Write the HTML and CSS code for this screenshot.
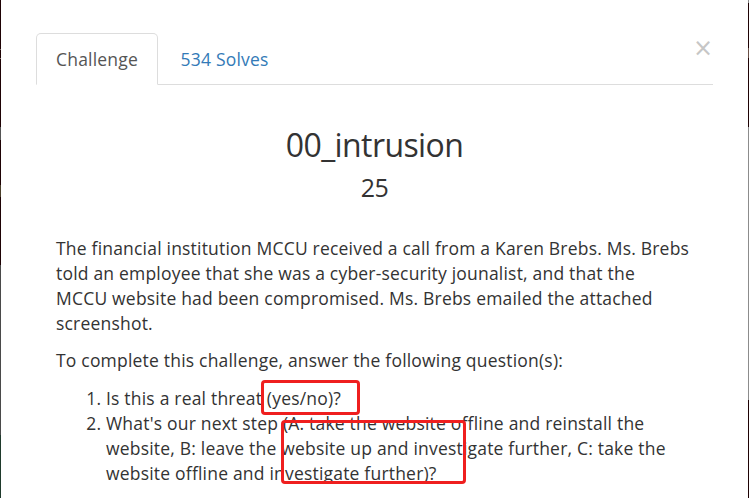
FILE: index.html
```html
<!DOCTYPE html>
<html>
<head>
<meta charset="utf-8">
<link rel="stylesheet" href="styles.css">
</head>
<body>
<div class="screen">
  <div class="edge edge-left"></div>
  <div class="main">
    <div class="modal">
      <span class="close">&times;</span>
      <ul class="tabs">
        <li class="tab active">Challenge</li>
        <li class="tab link">534 Solves</li>
      </ul>
      <div class="body">
        <h2 class="title">00_intrusion</h2>
        <h3 class="value">25</h3>
        <p class="desc">The financial institution MCCU received a call from a Karen Brebs. Ms. Brebs told an employee that she was a cyber-security jounalist, and that the MCCU&nbsp;website had been compromised. Ms. Brebs emailed the attached screenshot.</p>
        <p class="desc">To complete this challenge, answer the following question(s):</p>
        <ol class="questions">
          <li>Is this a real threat (yes/no)?</li>
          <li>What's our next step (A: take the website offline and reinstall the website, B: leave the website up and investigate further, C: take the website offline and investigate further)?</li>
        </ol>
      </div>
    </div>
    <div class="mark mark-one"></div>
    <div class="mark mark-two"></div>
  </div>
  <div class="edge edge-right"></div>
</div>
</body>
</html>
```
FILE: styles.css
```css
html, body {
  margin: 0;
  padding: 0;
  background: #ffffff;
}
.screen {
  display: flex;
  width: 749px;
  height: 498px;
  overflow: hidden;
}
.edge {
  width: 1px;
  flex: none;
}
.edge-left {
  background: linear-gradient(to bottom,
    #1e0204 0, #1e0204 49px, #7a6a66 49px, #7a6a66 50px,
    #1e0204 50px, #1e0204 58px, #8a7a76 58px, #8a7a76 59px,
    #1e0204 59px, #1e0204 127px, #555 127px, #555 140px,
    #1e0204 140px, #1e0204 185px, #4a3f2a 185px, #4a3f2a 197px,
    #1e0204 197px, #1e0204 265px, #4a4a4a 265px, #4a4a4a 435px,
    #1f3a2c 435px, #1f3a2c 498px);
}
.edge-right {
  background: linear-gradient(to bottom,
    #888 0, #888 3px, #1e0204 3px, #1e0204 48px,
    #6a5046 48px, #6a5046 58px, #1e0204 58px, #1e0204 127px,
    #8c8c8c 127px, #8c8c8c 400px, #1e0204 400px, #1e0204 498px);
}
.main {
  flex: 1;
  position: relative;
}
.modal {
  position: relative;
  width: 677px;
  margin-left: 35px;
  padding-top: 33px;
  font-family: "Open Sans", "Noto Sans", sans-serif;
  color: #333333;
  font-size: 17.5px;
  line-height: 25px;
  letter-spacing: 0.2px;
}
.close {
  position: absolute;
  top: 31px;
  right: 0;
  font-size: 24px;
  line-height: 34px;
  letter-spacing: 0;
  color: #c6c6c6;
  font-family: "DejaVu Sans", sans-serif;
  font-weight: normal;
}
.tabs {
  list-style: none;
  margin: 0;
  padding: 0;
  display: flex;
  border-bottom: 1px solid #dddddd;
}
.tab {
  padding: 12.5px 19px;
  margin-right: 2.5px;
  margin-bottom: -1px;
  border: 1px solid transparent;
  border-radius: 5px 5px 0 0;
  line-height: 25px;
}
.tab.active {
  color: #555555;
  background: #ffffff;
  border-color: #dddddd;
  border-bottom-color: transparent;
}
.tab.link {
  color: #337ab7;
}
.body {
  padding: 0 20px 0 20px;
}
.title {
  margin: 40px 0 0 0;
  text-align: center;
  font-size: 32px;
  line-height: 40px;
  letter-spacing: -0.6px;
  font-weight: normal;
}
.value {
  margin: 8px 0 0 0;
  text-align: center;
  font-size: 25px;
  line-height: 28px;
  letter-spacing: -0.5px;
  font-weight: normal;
}
.desc {
  margin: 34.7px 0 12.5px 0;
}
.desc + .desc {
  margin-top: 0;
}
.questions {
  margin: 0;
  padding-left: 50px;
}
.mark {
  position: absolute;
  border: 3px solid #ef1f1f;
  border-radius: 4px;
  box-sizing: border-box;
}
.mark-one {
  left: 260px;
  top: 380px;
  width: 99px;
  height: 35px;
}
.mark-two {
  left: 280px;
  top: 420px;
  width: 185px;
  height: 64px;
}
```
